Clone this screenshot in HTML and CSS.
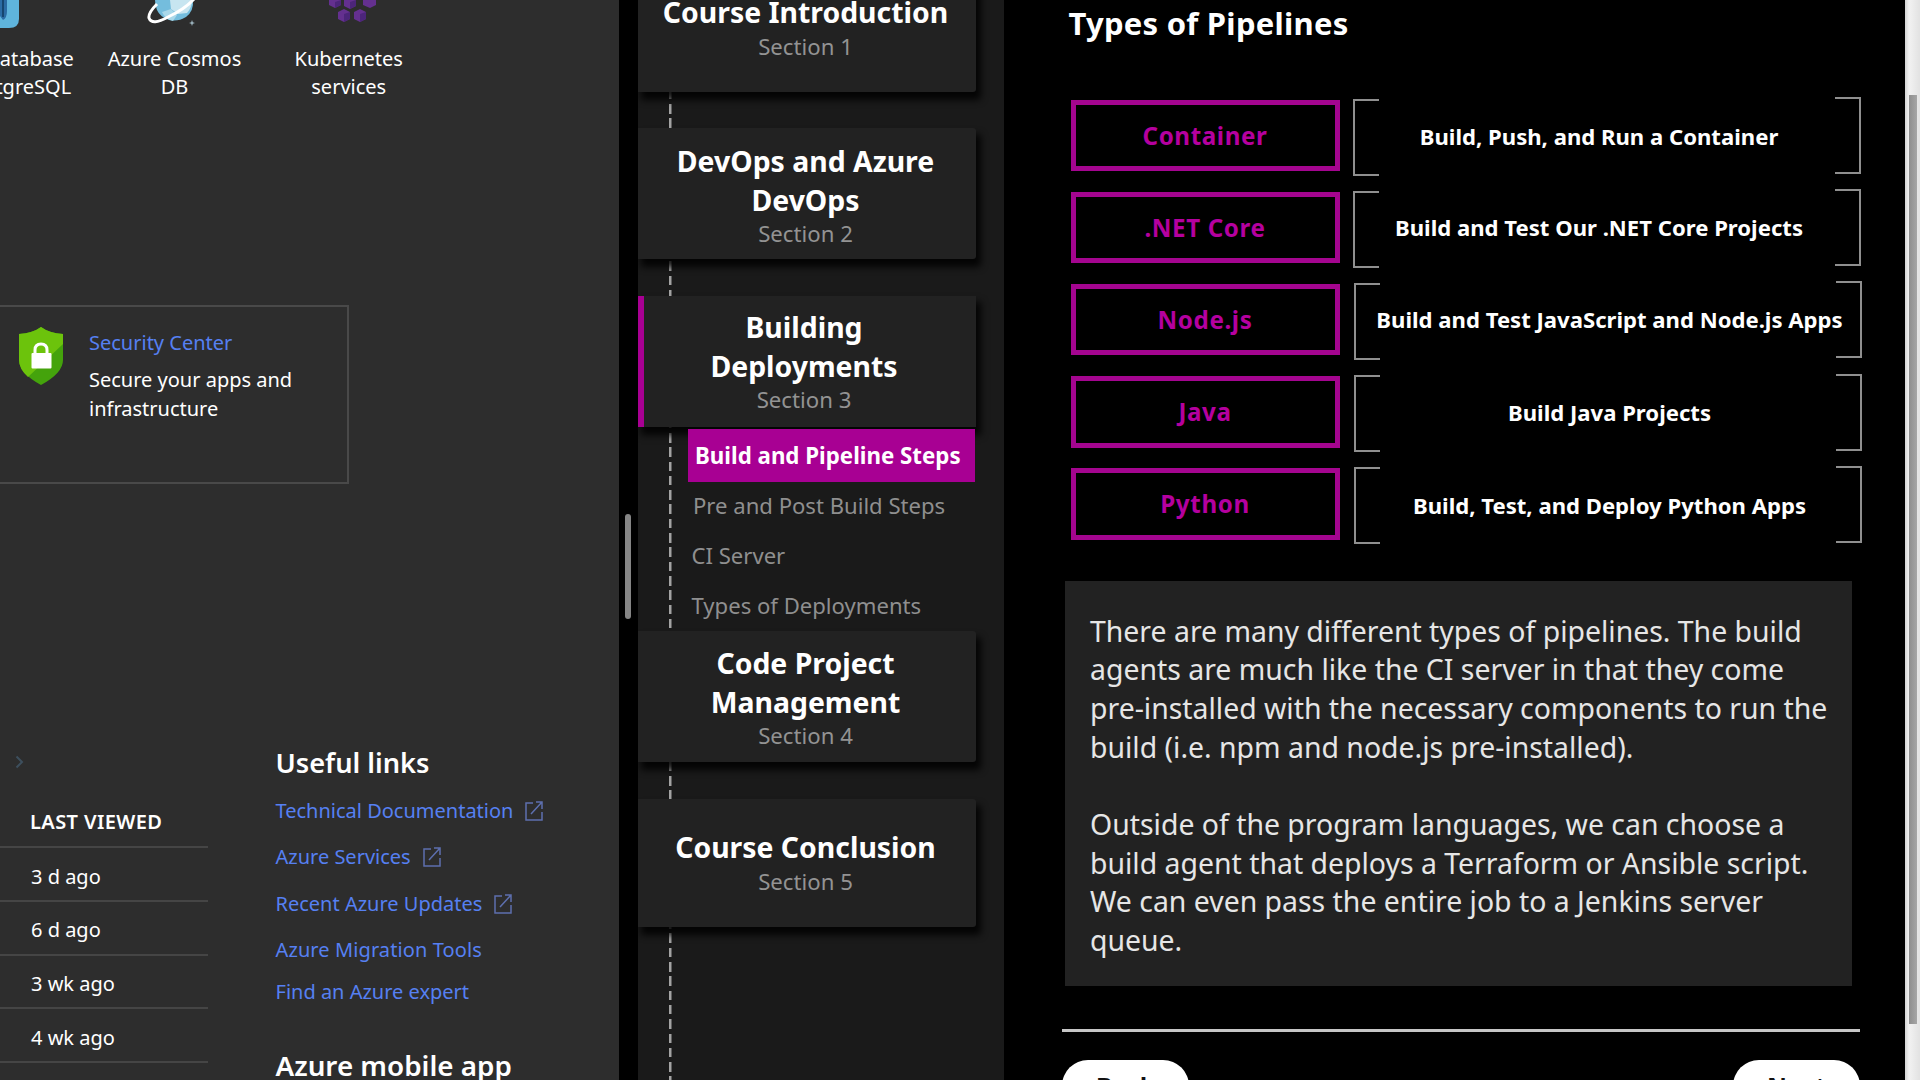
FILE: index.html
```html
<!DOCTYPE html>
<html lang="en">
<head>
<meta charset="utf-8">
<title>Types of Pipelines</title>
<link rel="stylesheet" href="styles.css">
</head>
<body>
<div class="screen">
  <section class="portal">
    <div class="services">
      <div class="service">
        <svg class="service-icon" viewBox="0 0 174 45" width="174" height="45">
          <path d="M64 0h42v19q0 9-10 9H74q-10 0-10-9z" fill="#5fb4dc"/>
          <path d="M72 0h22v11q0 7-4 9l-3-4-4 5h-5q-6-5-6-11z" fill="#2c6ca4"/>
          <path d="M90 0v17" stroke="#17466f" stroke-width="2"/>
        </svg>
        <span>Azure Database<br>for PostgreSQL</span>
      </div>
      <div class="service">
        <svg class="service-icon" viewBox="0 0 174 45" width="174" height="45">
          <path d="M68 0h38q1 11-7 17-8 5-17 3-9-3-12-10-2-5-2-10z" fill="#74bddd"/>
          <path d="M83 0h22q0 8-5 13l-9 1-7-5z" fill="#c7e5f0"/>
          <path d="M75 12l9-3 6 6-4 6q-8-2-11-9z" fill="#a9d8ea"/>
          <path d="M70 4q-9 9-8 14 3 8 19-1 17-8 26-18" fill="none" stroke="#fff" stroke-width="3"/>
          <path d="M105 20l.8 2.200 2.200.8-2.200.8-.8 2.200-.8-2.200-2.200-.8 2.200-.8z" fill="#9fb7c2"/>
        </svg>
        <span>Azure Cosmos<br>DB</span>
      </div>
      <div class="service">
        <svg class="service-icon" viewBox="0 0 174 45" width="174" height="45">
          <g fill="#64308f">
            <path d="M67 0h12v5l-6 3-6-3zM82 0h12v6l-6 3-6-3zM101 0h13v5l-6 3-7-3z"/>
            <path d="M76 12l6-3 6 3v7l-6 3-6-3zM92 12l6-3 6 3v7l-6 3-6-3z"/>
          </g>
          <path d="M82 14v8l6-3v-7zM98 14v8l6-3v-7zM88 2v7l6-3V0zM73 2v6l6-3V0z" fill="#4c257a"/>
        </svg>
        <span>Kubernetes<br>services</span>
      </div>
    </div>

    <div class="security">
      <svg class="shield" viewBox="0 0 46 58" width="46" height="58">
        <path d="M23 0q8 6 22 7v26q0 13-22 25Q1 46 1 33V7Q15 6 23 0z" fill="#44a30c"/>
        <path d="M23 0q8 6 22 7v10L10 50Q1 42 1 33V7Q15 6 23 0z" fill="#6cc30c"/>
        <path d="M17 27v-4q0-6 6-6t6 6v4" fill="none" stroke="#fff" stroke-width="3"/>
        <rect x="13.500" y="26" width="20" height="15.500" rx="1" fill="#fff"/>
      </svg>
      <div>
        <a class="link">Security Center</a>
        <p class="security-text">Secure your apps and<br>infrastructure</p>
      </div>
    </div>

    <div class="lower">
      <div class="recent">
        <svg class="chevron" viewBox="0 0 9 14" width="9" height="14"><path d="M1.500 1.500L7 7l-5.500 5.500" fill="none" stroke="#3d4f5d" stroke-width="2"/></svg>
        <div class="recent-head">LAST VIEWED</div>
        <div class="recent-row">3 d ago</div>
        <div class="recent-row">6 d ago</div>
        <div class="recent-row">3 wk ago</div>
        <div class="recent-row">4 wk ago</div>
      </div>
      <div class="useful">
        <h2 class="useful-title">Useful links</h2>
        <div class="useful-row"><a class="link">Technical Documentation</a><svg class="ext" viewBox="0 0 18 20" width="18" height="20"><path d="M8 2H1v17h16v-8M11 1h6v7M17 1L6 13"/></svg></div>
        <div class="useful-row"><a class="link">Azure Services</a><svg class="ext" viewBox="0 0 18 20" width="18" height="20"><path d="M8 2H1v17h16v-8M11 1h6v7M17 1L6 13"/></svg></div>
        <div class="useful-row"><a class="link">Recent Azure Updates</a><svg class="ext" viewBox="0 0 18 20" width="18" height="20"><path d="M8 2H1v17h16v-8M11 1h6v7M17 1L6 13"/></svg></div>
        <div class="useful-row migration"><a class="link">Azure Migration Tools</a></div>
        <div class="useful-row expert"><a class="link">Find an Azure expert</a></div>
        <h2 class="useful-title mobile">Azure mobile app</h2>
      </div>
    </div>
  </section>

  <div class="divider"><div class="handle"></div></div>

  <nav class="outline">
    <div class="card first">
      <h3>Course Introduction</h3><span>Section 1</span>
    </div>
    <div class="card second">
      <h3>DevOps and Azure<br>DevOps</h3><span>Section 2</span>
    </div>
    <div class="card active">
      <h3>Building<br>Deployments</h3><span>Section 3</span>
    </div>
    <ul class="lessons">
      <li class="current">Build and Pipeline Steps</li>
      <li class="indented">Pre and Post Build Steps</li>
      <li>CI Server</li>
      <li>Types of Deployments</li>
    </ul>
    <div class="card fourth">
      <h3>Code Project<br>Management</h3><span>Section 4</span>
    </div>
    <div class="card fifth">
      <h3>Course Conclusion</h3><span>Section 5</span>
    </div>
  </nav>

  <main class="content">
    <h1>Types of Pipelines</h1>
    <div class="pipelines">
      <div class="pipeline left-set">
        <div class="kind">Container</div>
        <div class="bracket open"></div><p>Build, Push, and Run a Container</p><div class="bracket close"></div>
      </div>
      <div class="pipeline left-set">
        <div class="kind">.NET Core</div>
        <div class="bracket open"></div><p>Build and Test Our .NET Core Projects</p><div class="bracket close"></div>
      </div>
      <div class="pipeline">
        <div class="kind">Node.js</div>
        <div class="bracket open"></div><p>Build and Test JavaScript and Node.js Apps</p><div class="bracket close"></div>
      </div>
      <div class="pipeline">
        <div class="kind">Java</div>
        <div class="bracket open"></div><p>Build Java Projects</p><div class="bracket close"></div>
      </div>
      <div class="pipeline last">
        <div class="kind">Python</div>
        <div class="bracket open"></div><p>Build, Test, and Deploy Python Apps</p><div class="bracket close"></div>
      </div>
    </div>
    <div class="note">There are many different types of pipelines. The build<br>agents are much like the CI server in that they come<br>pre-installed with the necessary components to run the<br>build (i.e. npm and node.js pre-installed).<br><br>Outside of the program languages, we can choose a<br>build agent that deploys a Terraform or Ansible script.<br>We can even pass the entire job to a Jenkins server<br>queue.</div>
    <div class="rule"></div>
    <div class="pager">
      <div class="pager-button">Back</div>
      <div class="pager-button">Next</div>
    </div>
  </main>

  <div class="scrollbar"><div class="thumb"></div></div>
</div>
</body>
</html>
```
FILE: styles.css
```css
* { box-sizing: border-box; }

body {
  margin: 0;
  background: #000;
  font-family: "Noto Sans", sans-serif;
  color: #fff;
}

h1, h2, h3, p, ul { margin: 0; padding: 0; }

.screen {
  display: flex;
  width: 1920px;
  height: 1080px;
  overflow: hidden;
}

/* Azure portal */
.portal {
  flex: none;
  width: 618.5px;
  height: 1080px;
  overflow: hidden;
  background: #2d2d2d;
  font-size: 20px;
  line-height: 28px;
  white-space: nowrap;
}

.services {
  display: flex;
  height: 304.500px;
  margin-left: -87px;
}

.service {
  flex: none;
  width: 174.3px;
  text-align: center;
}

.service-icon { display: block; }

.link { color: #5680f2; }

.security {
  display: flex;
  gap: 25.5px;
  width: 348.5px;
  height: 179.5px;
  padding: 20px 0 0 17.5px;
  border: 2px solid #494949;
  border-left: 0;
  line-height: 29px;
}

.security .link { display: block; margin-top: 1.500px; }
.security-text { margin-top: 8px; }

.lower {
  display: flex;
  gap: 67.5px;
  height: 596px;
}

.recent { width: 208px; padding-top: 271px; }

.chevron { display: block; margin-left: 15px; }

.recent-head {
  margin-top: 39px;
  padding: 0 0 10px 30px;
  border-bottom: 2px solid #454545;
  font-weight: 600;
  letter-spacing: 0.4px;
}

.recent-row {
  height: 53.8px;
  padding: 2.5px 0 0 31px;
  border-bottom: 2px solid #454545;
  line-height: 51px;
}

.useful { padding-top: 260px; }

.useful-title {
  font-size: 27.2px;
  font-weight: 600;
  line-height: 38px;
}

.useful-row {
  display: flex;
  align-items: center;
  gap: 12px;
  height: 28px;
  margin-bottom: 18.4px;
}

.useful-title + .useful-row { margin-top: 15px; }
.migration { margin-bottom: 14.3px; letter-spacing: 0.1px; }
.expert { margin-bottom: 40px; }
.mobile { font-size: 27.8px; }

.ext { fill: none; stroke: #5d6fae; stroke-width: 1.5; }

/* Split-view divider */
.divider {
  flex: none;
  width: 19.5px;
  padding: 513.500px 0 0 6.5px;
  background: #000;
}

.handle {
  width: 6px;
  height: 105px;
  border-radius: 3px;
  background: #858585;
}

/* Course outline */
.outline {
  flex: none;
  width: 366px;
  height: 1080px;
  overflow: hidden;
  background: repeating-linear-gradient(to bottom, #a3a3a3 0 9.5px, transparent 9.5px 14.3px) 31px 4px / 2.500px 100% no-repeat, #1a1a1a;
  text-align: center;
}

.card {
  width: 338px;
  height: 130.500px;
  padding: 14px 3px 0 0;
  border-radius: 0 3px 3px 0;
  background: #222;
  box-shadow: 4px 7px 7px 1px rgba(0, 0, 0, 0.85);
}

.card h3 {
  font-size: 28.4px;
  font-weight: 700;
  line-height: 38.5px;
}

.card span {
  display: block;
  color: #939393;
  font-size: 22.2px;
  line-height: 30px;
}

.first { height: 128.500px; margin-top: -37px; padding-top: 30px; }
.second { margin-top: 36.500px; }
.active {
  margin-top: 37.5px;
  padding: 12px 12px 0 0;
  border-left: 6px solid #a80093;
  border-radius: 0;
}
.fourth { margin-top: 1.500px; padding-top: 13px; }
.fifth { height: 128px; margin-top: 37.500px; padding-top: 29px; }
.first span, .fifth span { margin-top: 0.5px; }

.lessons {
  margin: 2px 0 0 50px;
  list-style: none;
  text-align: left;
  color: #8f8f8f;
  font-size: 22.1px;
  line-height: 50px;
  white-space: nowrap;
}

.lessons li { padding-left: 3.5px; }
.lessons .indented { padding-left: 5px; }

.lessons .current {
  width: 287px;
  height: 53px;
  margin-bottom: -2px;
  padding-left: 7px;
  background: #a80093;
  color: #fff;
  font-size: 22.3px;
  font-weight: 700;
  line-height: 53px;
}

.lessons li:last-child { margin-bottom: 0.5px; }

/* Lesson */
.content {
  flex: none;
  width: 901px;
  height: 1080px;
  overflow: hidden;
  background: #000;
}

.content h1 {
  height: 98px;
  padding-left: 64.5px;
  font-size: 31px;
  font-weight: 700;
  letter-spacing: 0.25px;
  line-height: 46px;
}

.pipelines {
  display: grid;
  row-gap: 15.2px;
  margin-left: 66.5px;
  width: 791px;
}

.pipeline {
  display: flex;
  height: 77px;
}

.kind {
  width: 269px;
  height: 71.500px;
  margin: 1.5px 13px 0 0;
  border: 5px solid #a4058f;
  color: #b5009f;
  font-size: 24.2px;
  font-weight: 700;
  letter-spacing: 0.6px;
  line-height: 61px;
  text-align: center;
}

.bracket {
  width: 26px;
  height: 77px;
  border: 2px solid #8f8f8f;
}

.open { margin-top: 0.5px; border-right: 0; }
.close { margin-top: -1px; border-left: 0; }
.pipeline:nth-child(n+3) .open { margin-left: 1px; }
.left-set .close { margin-right: 1px; }

.pipeline p {
  flex: 1;
  margin: 0 -26px 0 -22px;
  font-size: 22.12px;
  font-weight: 700;
  line-height: 74px;
  text-align: center;
  white-space: nowrap;
}

.left-set p { margin: 0 -16px 0 -31px; }
.left-set:first-child p { line-height: 76px; }
.left-set:nth-child(2) p { line-height: 75px; }
.last p { line-height: 77px; }

.note {
  width: 787px;
  height: 405px;
  margin: 37.5px 0 0 61px;
  padding: 30.500px 0 0 25px;
  background: #222;
  color: #e6e6e6;
  font-size: 28.42px;
  line-height: 38.67px;
  white-space: nowrap;
}

.rule {
  width: 798px;
  height: 3px;
  margin: 43px 0 0 58px;
  background: #c6c6c6;
}

.pager {
  display: flex;
  justify-content: space-between;
  width: 798px;
  margin: 28px 0 0 58px;
}

.pager-button {
  width: 127px;
  height: 52px;
  border-radius: 26px;
  background: #fff;
  color: #111;
  font-size: 24.5px;
  font-weight: 700;
  line-height: 54px;
  text-align: center;
}

/* Window scrollbar */
.scrollbar {
  flex: none;
  width: 15px;
  height: 1080px;
  padding: 95px 0 0 3.5px;
  background: linear-gradient(to right, #d4d4d4, #f2f2f2 4px, #e2e2e2);
}

.thumb {
  width: 8px;
  height: 929px;
  background: linear-gradient(to right, #8e8e8e, #a6a6a6);
}
```
